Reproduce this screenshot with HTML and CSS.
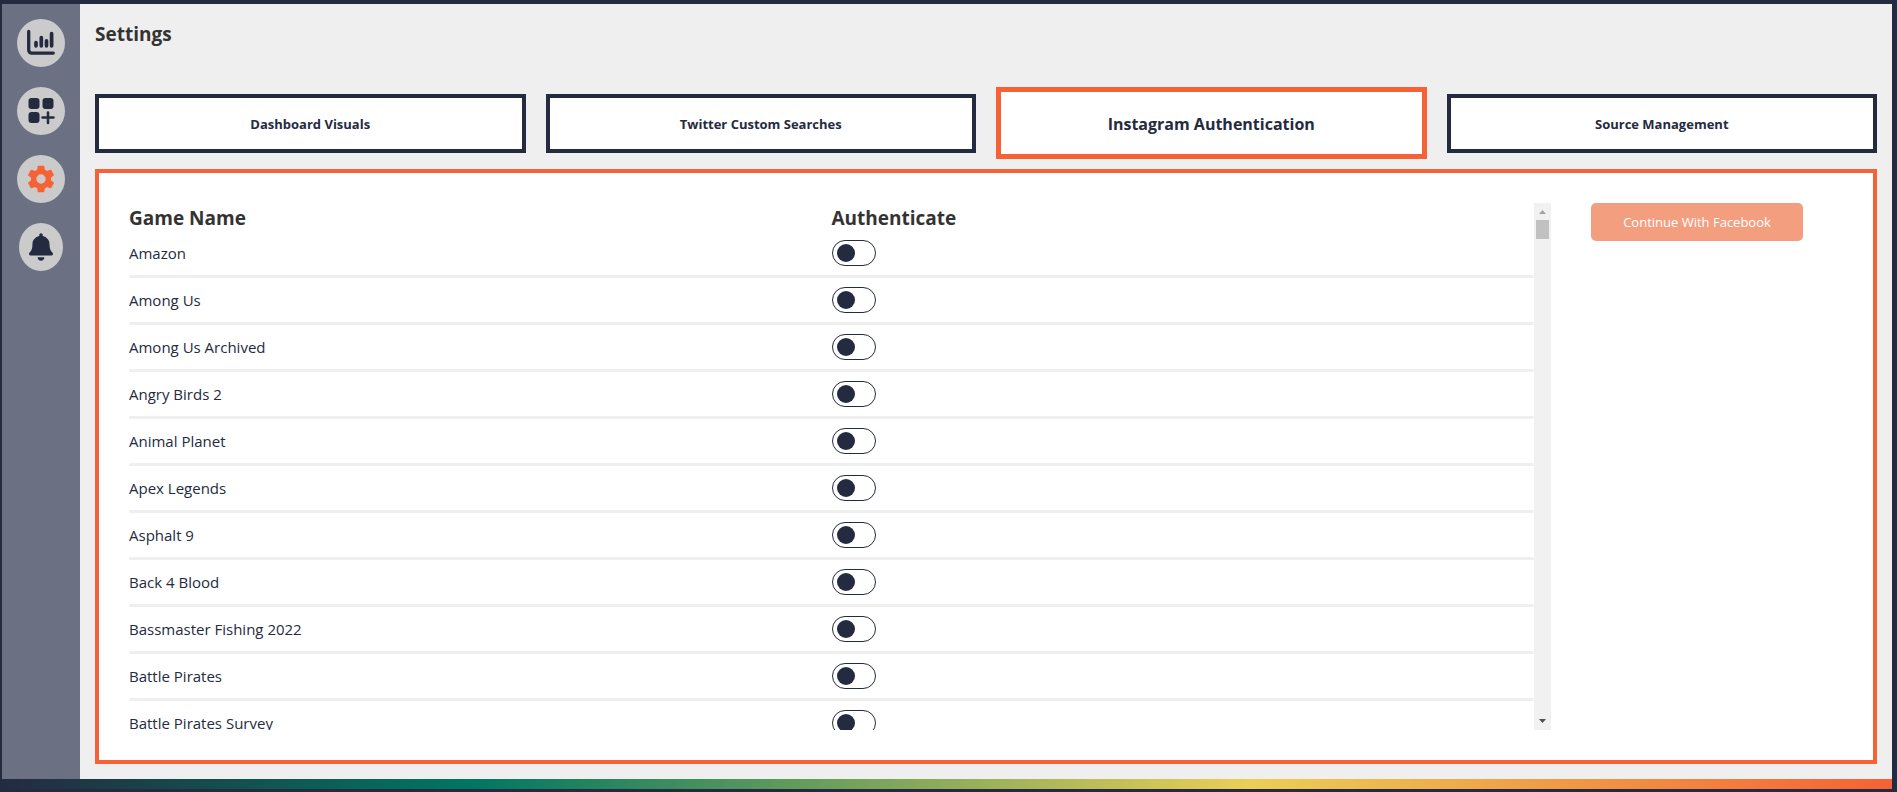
FILE: index.html
```
<!DOCTYPE html>
<html lang="en">
<head>
  <meta charset="UTF-8">
  <meta name="viewport" content="width=device-width, initial-scale=1.0">
  <title>Settings</title>
  <link rel="stylesheet" href="styles.css">
</head>
<body>

  <div class="app">
    <div class="app-body">
      <nav class="sidebar">
        <a class="nav-link" href="#" aria-label="Dashboard">
          <svg width="28" height="28" viewBox="0 0 28 28" fill="none" stroke="currentColor" stroke-linecap="round">
            <path stroke-width="3.3" d="M1.700 2.500v18.600a3 3 0 0 0 3 3h21.600" />
            <path stroke-width="3.7" d="M9 13.600v3.200M14.300 8.500v8.300M19.500 11.800v5M24.600 4.600v12.200" />
          </svg>
        </a>
        <a class="nav-link" href="#" aria-label="Add widget">
          <svg width="28" height="28" viewBox="0 0 28 28" fill="currentColor">
            <rect x="1.500" y="1" width="11" height="11" rx="3" />
            <rect x="15.500" y="1" width="11" height="11" rx="3" />
            <rect x="1.500" y="15" width="11" height="11" rx="3" />
            <path d="M21 15.500v10.500M15.500 20.500h11" fill="none" stroke="currentColor" stroke-width="2.500" stroke-linecap="round" />
          </svg>
        </a>
        <a class="nav-link nav-link-active" href="#" aria-label="Settings">
          <svg width="32" height="32" viewBox="0 0 24 24" fill="currentColor">
            <path d="M19.430 12.980c.04-.32.07-.64.07-.98s-.03-.66-.07-.98l2.110-1.650c.19-.15.24-.42.12-.64l-2-3.460c-.12-.22-.39-.3-.61-.22l-2.490 1c-.52-.4-1.080-.73-1.690-.98l-.38-2.650C14.460 2.180 14.250 2 14 2h-4c-.25 0-.46.18-.49.42l-.38 2.650c-.61.25-1.170.59-1.690.98l-2.490-1c-.23-.09-.49 0-.61.22l-2 3.460c-.13.22-.07.49.12.64l2.110 1.650c-.04.32-.07.65-.07.98s.03.66.07.98l-2.110 1.650c-.19.15-.24.42-.12.64l2 3.460c.12.22.39.3.61.22l2.490-1c.52.4 1.080.73 1.690.98l.38 2.650c.03.24.24.42.49.42h4c.25 0 .46-.18.49-.42l.38-2.650c.61-.25 1.170-.59 1.690-.98l2.490 1c.23.09.49 0 .61-.22l2-3.460c.12-.22.07-.49-.12-.64l-2.110-1.650zM12 15.500a3.500 3.500 0 1 1 0-7 3.500 3.500 0 0 1 0 7z" />
          </svg>
        </a>
        <a class="nav-link nav-link-narrow" href="#" aria-label="Notifications">
          <svg width="24" height="28" viewBox="0 0 448 512" fill="currentColor">
            <path d="M224 512c35.320 0 63.970-28.650 63.970-64H160.030c0 35.350 28.650 64 63.970 64zm215.390-149.710c-19.320-20.760-55.470-51.990-55.470-154.290 0-77.700-54.480-139.900-127.940-155.160V32c0-17.670-14.320-32-31.980-32s-31.980 14.330-31.980 32v20.840C118.560 68.100 64.080 130.300 64.080 208c0 102.300-36.150 133.530-55.470 154.290-6 6.450-8.660 14.160-8.610 21.710.11 16.400 12.980 32 32.100 32h383.800c19.120 0 32-15.600 32.100-32 .05-7.550-2.610-15.270-8.610-21.710z" />
          </svg>
        </a>
      </nav>

      <main class="content">
        <h1 class="page-title">Settings</h1>

        <div class="tabs">
          <button class="tab">Dashboard Visuals</button>
          <button class="tab">Twitter Custom Searches</button>
          <button class="tab tab-active">Instagram Authentication</button>
          <button class="tab">Source Management</button>
        </div>

        <section class="panel">
          <div class="game-list">
            <div class="game-scroll">
              <div class="game-header">
                <h2>Game Name</h2>
                <h2>Authenticate</h2>
              </div>
              <div id="game-rows"></div>
            </div>
            <div class="scrollbar" aria-hidden="true">
              <svg class="arrow-up" width="7" height="4" viewBox="0 0 7 4"><path d="M0 4L3.500 0L7 4z" /></svg>
              <div class="scroll-thumb"></div>
              <svg class="arrow-down" width="7" height="4" viewBox="0 0 7 4"><path d="M0 0h7L3.500 4z" /></svg>
            </div>
          </div>
          <div class="actions">
            <button class="facebook-button">Continue With Facebook</button>
          </div>
        </section>
      </main>
    </div>
    <div class="rainbow"></div>
  </div>

  <script>
    const games = [
      'Amazon',
      'Among Us',
      'Among Us Archived',
      'Angry Birds 2',
      'Animal Planet',
      'Apex Legends',
      'Asphalt 9',
      'Back 4 Blood',
      'Bassmaster Fishing 2022',
      'Battle Pirates',
      'Battle Pirates Survey'
    ];

    const gameRows = document.getElementById('game-rows');

    games.forEach((name, index) => {
      const row = document.createElement('div');
      row.className = 'game-row';

      const label = document.createElement('label');
      label.htmlFor = `game-${index}`;
      label.textContent = name;

      const toggle = document.createElement('input');
      toggle.type = 'checkbox';
      toggle.id = `game-${index}`;
      toggle.className = 'toggle';

      row.append(label, toggle);
      gameRows.appendChild(row);
    });
  </script>

</body>
</html>
```
FILE: styles.css
```
* {
  box-sizing: border-box;
}
body {
  margin: 0;
  font-family: "Segoe UI", "Open Sans", sans-serif;
  color: #242b40;
  background-color: #242b40;
}
button {
  font-family: inherit;
  cursor: pointer;
}
.app {
  display: flex;
  flex-direction: column;
  height: 100vh;
  padding: 4px 5px 3px 2px;
}
.app-body {
  display: flex;
  flex: 1;
  min-height: 0;
}
.rainbow {
  height: 10px;
  background: linear-gradient(to right, #242b40, #007761 25%, #ebcf56 66%, #f66135);
}

/* Sidebar */
.sidebar {
  display: flex;
  flex-direction: column;
  align-items: center;
  gap: 20px;
  width: 78px;
  padding-top: 15px;
  background-color: #6b7083;
}
.nav-link {
  display: flex;
  align-items: center;
  justify-content: center;
  width: 48px;
  height: 48px;
  border-radius: 50%;
  color: #242b40;
  background-color: #cbcbcb;
}
.nav-link-active {
  color: #f66135;
}
.nav-link-narrow {
  width: 44px;
}

/* Content */
.content {
  display: flex;
  flex-direction: column;
  flex: 1;
  min-width: 0;
  padding: 15px;
  background-color: #efefef;
}
.page-title {
  margin: 0 0 38px;
  font-size: 19px;
  line-height: 30px;
  color: #333;
}
.tabs {
  display: grid;
  grid-template-columns: repeat(4, 1fr);
  gap: 20px;
  align-items: center;
  height: 72px;
  margin-bottom: 10px;
}
.tab {
  height: 59px;
  padding: 2px 6px 0;
  border: 4px solid #242b40;
  font-size: 13px;
  font-weight: bold;
  color: #242b40;
  background-color: white;
}
.tab-active {
  height: 72px;
  border: 5px solid #f66135;
  font-size: 16px;
}

/* Panel */
.panel {
  display: grid;
  grid-template-columns: minmax(0, 1fr) 252px;
  grid-template-rows: minmax(0, 1fr);
  gap: 40px;
  flex: 1;
  min-height: 0;
  padding: 30px;
  border: 4px solid #f66135;
  background-color: white;
}
.game-list {
  display: flex;
}
.game-scroll {
  flex: 1;
  overflow: hidden;
}
.game-header,
.game-row {
  display: grid;
  grid-template-columns: 1fr 1fr;
  align-items: center;
}
.game-header {
  padding-top: 2px;
}
.game-header h2 {
  margin: 0;
  font-size: 19px;
  line-height: 26px;
  color: #333;
}
.game-row {
  grid-template-rows: 44px 3px;
  font-size: 15px;
}
.game-row::after {
  content: "";
  grid-column: 1 / 3;
  height: 3px;
  border-radius: 2px;
  background-color: #efefef;
}
.toggle {
  appearance: none;
  width: 44px;
  height: 26px;
  margin: 0;
  padding: 3px 4px;
  border: 1px solid #242b40;
  border-radius: 13px;
  cursor: pointer;
}
.toggle::before {
  content: "";
  display: block;
  width: 18px;
  height: 18px;
  border-radius: 50%;
  background-color: #242b40;
}
.toggle:checked::before {
  margin-left: auto;
  background-color: #f66135;
}
.scrollbar {
  display: flex;
  flex-direction: column;
  align-items: center;
  width: 17px;
  padding: 7px 2px;
  background-color: #f1f1f1;
}
.scroll-thumb {
  width: 13px;
  height: 19px;
  margin-top: 6px;
  background-color: #c1c1c1;
}
.arrow-up {
  fill: #a3a3a3;
}
.arrow-down {
  margin-top: auto;
  fill: #505050;
}
.facebook-button {
  width: 212px;
  height: 38px;
  border: none;
  border-radius: 5px;
  font-size: 13px;
  color: white;
  background-color: #f49e80;
}
```
